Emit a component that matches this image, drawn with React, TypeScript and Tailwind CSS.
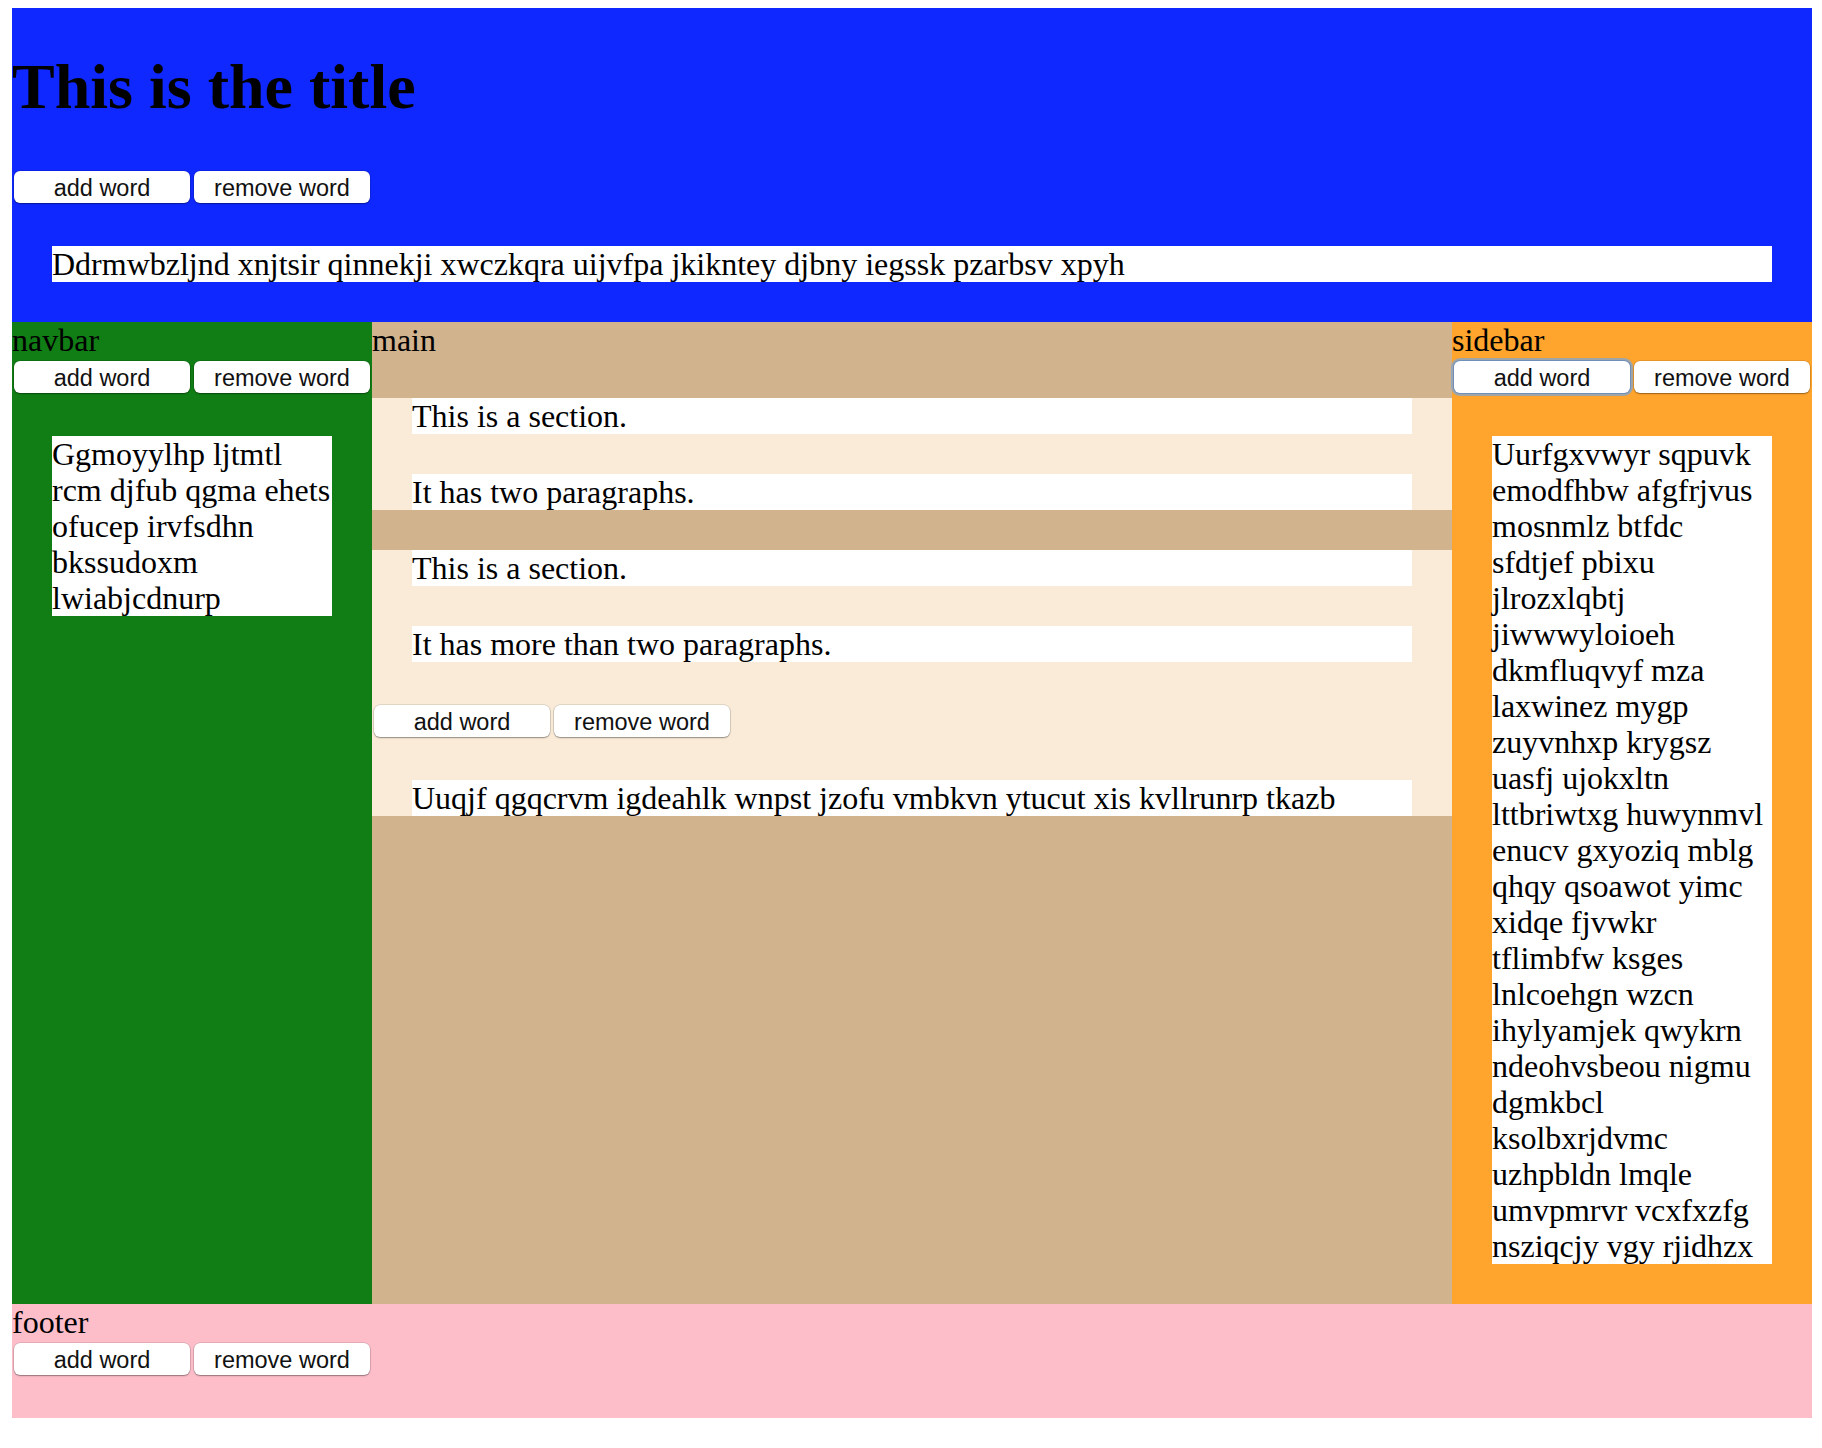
import React from "react";

const serif = { fontFamily: '"Liberation Serif", "Times New Roman", serif' };

function Btn({ label, focused }: { label: string; focused?: boolean }) {
  return (
    <button
      className={
        focused
          ? "mx-[2px] h-[32px] w-[176px] rounded-[6px] bg-white pt-[2px] text-[23.5px] leading-[30px] text-[#111] shadow-[0_0_0_1px_#6f8fb8,0_0_0_3px_rgba(128,165,210,0.75)]"
          : "mx-[2px] h-[32px] w-[176px] rounded-[6px] bg-white pt-[2px] text-[23.5px] leading-[30px] text-[#111] shadow-[0_0_0_0.5px_rgba(0,0,0,0.18),0_1px_1.5px_rgba(0,0,0,0.35)]"
      }
      style={{ fontFamily: '"Liberation Sans", Arial, sans-serif' }}
    >
      {label}
    </button>
  );
}

function Buttons() {
  return (
    <div className="flex h-[38px] items-center">
      <Btn label="add word" />
      <Btn label="remove word" />
    </div>
  );
}

function Lines({ lines }: { lines: string[] }) {
  return (
    <>
      {lines.map((l, i) => (
        <React.Fragment key={i}>
          {l}
          {i < lines.length - 1 && <br />}
        </React.Fragment>
      ))}
    </>
  );
}

const navLines = [
  "Ggmoyylhp ljtmtl",
  "rcm djfub qgma ehets",
  "ofucep irvfsdhn",
  "bkssudoxm",
  "lwiabjcdnurp",
];

const sideLines = [
  "Uurfgxvwyr sqpuvk",
  "emodfhbw afgfrjvus",
  "mosnmlz btfdc",
  "sfdtjef pbixu",
  "jlrozxlqbtj",
  "jiwwwyloioeh",
  "dkmfluqvyf mza",
  "laxwinez mygp",
  "zuyvnhxp krygsz",
  "uasfj ujokxltn",
  "lttbriwtxg huwynmvl",
  "enucv gxyoziq mblg",
  "qhqy qsoawot yimc",
  "xidqe fjvwkr",
  "tflimbfw ksges",
  "lnlcoehgn wzcn",
  "ihylyamjek qwykrn",
  "ndeohvsbeou nigmu",
  "dgmkbcl",
  "ksolbxrjdvmc",
  "uzhpbldn lmqle",
  "umvpmrvr vcxfxzfg",
  "nsziqcjy vgy rjidhzx",
];

export default function App() {
  return (
    <div className="min-h-[1448px] bg-white pl-[12px] pr-[10px] pt-[8px] text-[32px] leading-[36px] text-black" style={serif}>
      <div className="grid w-[1800px] grid-cols-[360px_1080px_360px]">
        <header className="col-span-3 bg-[#0f28ff] pb-[40px] pt-[43px]">
          <h1 className="text-[64px] font-bold leading-[71px]">This is the title</h1>
          <div className="mt-[46px]">
            <Buttons />
          </div>
          <p className="mx-[40px] mt-[40px] whitespace-nowrap bg-white">
            Ddrmwbzljnd xnjtsir qinnekji xwczkqra uijvfpa jkikntey djbny iegssk pzarbsv xpyh
          </p>
        </header>

        <nav className="bg-[#117d15]">
          <div>navbar</div>
          <Buttons />
          <p className="mx-[40px] my-[40px] whitespace-nowrap bg-white">
            <Lines lines={navLines} />
          </p>
        </nav>

        <main className="bg-[#d1b38d]">
          <div>main</div>
          <section className="mt-[40px] bg-[#f9ebd8]">
            <p className="mx-[40px] bg-white">This is a section.</p>
            <p className="mx-[40px] mt-[40px] bg-white">It has two paragraphs.</p>
          </section>
          <section className="mt-[40px] bg-[#f9ebd8]">
            <p className="mx-[40px] bg-white">This is a section.</p>
            <p className="mx-[40px] mt-[40px] bg-white">It has more than two paragraphs.</p>
            <div className="mt-[40px]">
              <Buttons />
            </div>
            <p className="mx-[40px] mt-[40px] whitespace-nowrap bg-white">
              Uuqjf qgqcrvm igdeahlk wnpst jzofu vmbkvn ytucut xis kvllrunrp tkazb
            </p>
          </section>
        </main>

        <aside className="bg-[#ffa42c]">
          <div>sidebar</div>
          <div className="flex h-[38px] items-center">
            <Btn label="add word" focused />
            <Btn label="remove word" />
          </div>
          <p className="mx-[40px] my-[40px] whitespace-nowrap bg-white">
            <Lines lines={sideLines} />
          </p>
        </aside>

        <footer className="col-span-3 bg-[#fdbeca] pb-[40px]">
          <div>footer</div>
          <Buttons />
        </footer>
      </div>
    </div>
  );
}
